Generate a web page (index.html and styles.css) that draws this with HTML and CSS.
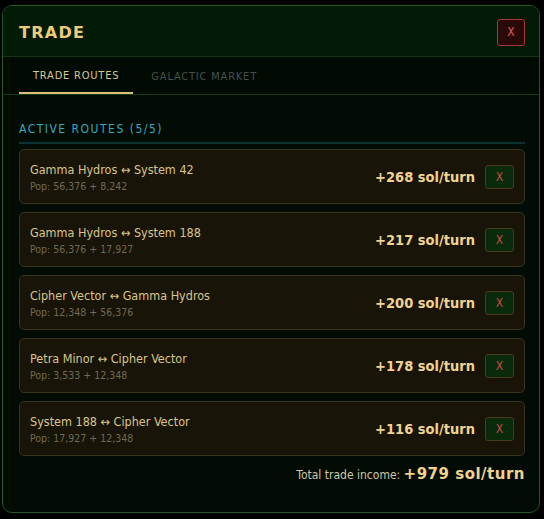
FILE: index.html
```html
<!DOCTYPE html>
<html>
<head>
<meta charset="utf-8">
<link rel="stylesheet" href="styles.css">
</head>
<body>
<div class="panel">
  <div class="header">
    <div class="title">TRADE</div>
    <div class="close">X</div>
  </div>
  <div class="tabs">
    <div class="tab active">TRADE ROUTES</div>
    <div class="tab">GALACTIC MARKET</div>
  </div>
  <div class="content">
    <div class="section-title">ACTIVE ROUTES (5/5)</div>
    <div class="routes">
      <div class="route">
        <div class="info"><div class="name">Gamma Hydros ↔ System 42</div><div class="pop">Pop: 56,376 + 8,242</div></div>
        <div class="income">+268 sol/turn</div>
        <div class="rm">X</div>
      </div>
      <div class="route">
        <div class="info"><div class="name">Gamma Hydros ↔ System 188</div><div class="pop">Pop: 56,376 + 17,927</div></div>
        <div class="income">+217 sol/turn</div>
        <div class="rm">X</div>
      </div>
      <div class="route">
        <div class="info"><div class="name">Cipher Vector ↔ Gamma Hydros</div><div class="pop">Pop: 12,348 + 56,376</div></div>
        <div class="income">+200 sol/turn</div>
        <div class="rm">X</div>
      </div>
      <div class="route">
        <div class="info"><div class="name">Petra Minor ↔ Cipher Vector</div><div class="pop">Pop: 3,533 + 12,348</div></div>
        <div class="income">+178 sol/turn</div>
        <div class="rm">X</div>
      </div>
      <div class="route">
        <div class="info"><div class="name">System 188 ↔ Cipher Vector</div><div class="pop">Pop: 17,927 + 12,348</div></div>
        <div class="income">+116 sol/turn</div>
        <div class="rm">X</div>
      </div>
    </div>
    <div class="total">Total trade income: <span class="total-val">+979 sol/turn</span></div>
  </div>
</div>
</body>
</html>
```
FILE: styles.css
```css
html, body { margin: 0; padding: 0; background: #000; }
body {
  width: 544px; height: 519px;
  padding: 5px 4px 6px 2px;
  box-sizing: border-box;
  font-family: "DejaVu Sans Condensed", "DejaVu Sans", sans-serif;
}
.panel {
  height: 508px;
  box-sizing: border-box;
  border: 1px solid #1d5a24;
  border-radius: 10px;
  background: #020c05;
  overflow: hidden;
  display: flex;
  flex-direction: column;
}
.header {
  height: 51px;
  background: #031b06;
  display: flex;
  align-items: center;
  justify-content: space-between;
  padding: 2px 14px 0 16px;
  box-sizing: border-box;
  border-bottom: 1px solid #0f3512;
}
.title {
  color: #eccb7c;
  font-family: "DejaVu Sans", sans-serif;
  font-weight: bold;
  font-size: 16px;
  letter-spacing: 1.3px;
}
.close {
  width: 26px; height: 25px;
  border: 1px solid #a8363a;
  border-radius: 3px;
  background: #2a0a09;
  color: #e05a5a;
  font-size: 12px;
  display: flex; align-items: center; justify-content: center;
}
.tabs {
  height: 38px;
  background: #010a03;
  border-bottom: 1px solid #123a16;
  display: flex;
  padding-left: 16px;
  box-sizing: border-box;
}
.tab {
  padding: 0 14px;
  font-size: 11px;
  letter-spacing: 0.8px;
  color: #46524a;
  display: flex; align-items: center;
  padding-top: 2px;
  box-sizing: border-box;
  height: 37px;
  margin-right: 4px;
}
.tab.active {
  color: #d8c890;
  border-bottom: 2px solid #d9c07a;
  height: 37px;
}
.content {
  padding: 27px 14px 0 16px;
  display: flex;
  flex-direction: column;
  flex: 1;
}
.section-title {
  color: #3aa6bf;
  font-size: 12px;
  letter-spacing: 1.5px;
  padding-bottom: 6px;
  border-bottom: 2px solid #0b3335;
  margin-bottom: 5px;
}
.routes { display: flex; flex-direction: column; gap: 8px; }
.route {
  height: 55px;
  box-sizing: border-box;
  border: 1px solid #3a3519;
  border-radius: 5px;
  background: #181407;
  display: flex;
  align-items: center;
  padding: 0 10px 0 10px;
}
.info { flex: 1; }
.name { color: #d9c58d; font-size: 12.5px; margin-top: 1px; }
.pop { color: #6f6a55; font-size: 10.5px; margin-top: 3px; }
.income {
  color: #f0d391;
  font-weight: bold;
  font-size: 14.5px;
  margin-right: 10px;
}
.rm {
  width: 27px; height: 22px;
  border: 1px solid #4a3a1c;
  border-radius: 3px;
  background: #0a2a0c;
  color: #c54c42;
  font-size: 12px;
  display: flex; align-items: center; justify-content: center;
}
.total {
  text-align: right;
  margin-top: 9px;
  color: #cfc6a2;
  font-size: 12px;
}
.total-val {
  color: #f0d391;
  font-family: "DejaVu Sans", sans-serif;
  font-weight: bold;
  font-size: 15px;
  letter-spacing: 0.5px;
}
```
